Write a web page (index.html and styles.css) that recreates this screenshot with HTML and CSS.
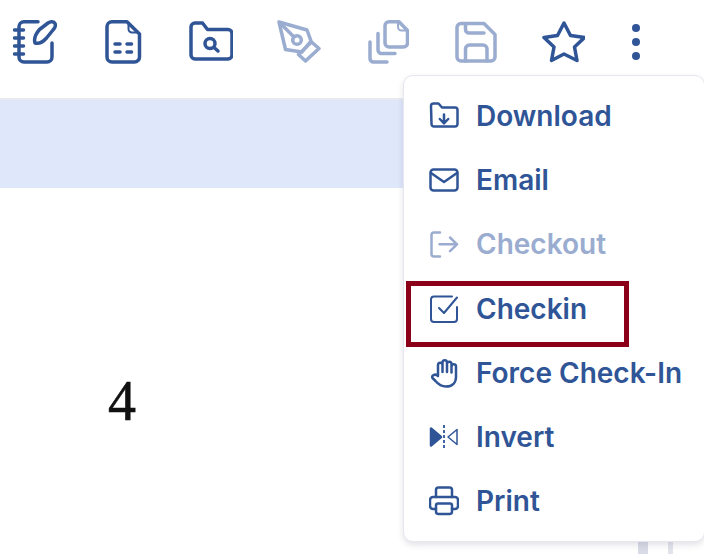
FILE: index.html
```html
<!DOCTYPE html>
<html lang="en">
<head>
<meta charset="utf-8">
<title>Document viewer</title>
<link rel="stylesheet" href="styles.css">
</head>
<body>
<div class="page">
  <header class="toolbar">
    <svg class="tool" viewBox="13 20 44 44"><path d="M38 21.800H24a5 5 0 0 0-5 5V57a5 5 0 0 0 5 5h23a5 5 0 0 0 5-5V43"/><path d="M14.500 30h9M14.500 38h9M14.500 46h9M14.500 54h9"/><path d="M35 43c-1.500-5 1-9.500 4.500-13.500L48 23c2.500-1.800 6-1.500 7 .5s.2 4-2 6.500l-6.500 8c-3.500 4-7.500 6-11.500 5z"/></svg>
    <svg class="tool" viewBox="101 20 44 44"><path d="M127 21.800h-15a5 5 0 0 0-5 5V57a5 5 0 0 0 5 5h22.500a5 5 0 0 0 5-5V34z"/><path class="thin" d="M128.500 23v6a3.500 3.500 0 0 0 3.500 3.500h6z"/><path d="M115 44h5M127 44h4.500M115 52h5M127 52h4.500"/></svg>
    <svg class="tool" viewBox="189 20 44 44"><path d="M191 27a4 4 0 0 1 4-4h7.500l5 6.500H228a4 4 0 0 1 4 4V55a4 4 0 0 1-4 4H195a4 4 0 0 1-4-4z"/><circle cx="210" cy="43.500" r="5"/><path d="M214 47.500l4 3.500"/></svg>
    <svg class="tool off" viewBox="277 20 44 44"><path d="M279 22l28 8 4 11-9 11-16.500-2.500z"/><path d="M280 23l14 14"/><circle cx="297" cy="40" r="4.300"/><path d="M311.500 42l7.500 6.500-13.500 12.500-7-6.500z"/></svg>
    <svg class="tool off" viewBox="365 20 44 44"><path d="M399 21.800h-10a4 4 0 0 0-4 4V43a4 4 0 0 0 4 4h14.500a4 4 0 0 0 4-4V30.500z"/><path class="thin" d="M398 23v4a3.500 3.500 0 0 0 3.500 3.500h5"/><path d="M378 33.500V50a3.500 3.500 0 0 0 3.500 3.500H395"/><path d="M370 42v16.500a3.500 3.500 0 0 0 3.500 3.500H387"/></svg>
    <svg class="tool off" viewBox="453 20 44 44"><path d="M484 23.500h-23a4 4 0 0 0-4 4V57a4 4 0 0 0 4 4h30a4 4 0 0 0 4-4V34.500z"/><path d="M465.500 24v5.500a3.500 3.500 0 0 0 3.500 3.500h15"/><path d="M465.500 61V49a4 4 0 0 1 4-4H483a4 4 0 0 1 4 4v12"/></svg>
    <svg class="tool" viewBox="541 20 44 44"><path d="M564 23l6.500 12.500 14 2-10 9.500 2.500 13.500-13-6.500-12.500 6.500 2.500-13.500-10-9.500 13.500-2z"/></svg>
    <svg class="tool dots" viewBox="629 20 14 44"><circle cx="636" cy="28" r="4"/><circle cx="636" cy="42" r="4"/><circle cx="636" cy="56" r="4"/></svg>
  </header>
  <div class="band"></div>
  <main class="sheet">
    <div class="number">4</div>
    <div class="marks"><span class="mark wide"></span><span class="mark"></span></div>
  </main>

  <nav class="menu">
    <a class="item">
      <svg class="icon" viewBox="429 101 30 30"><path d="M431 106a2.500 2.500 0 0 1 2.500-2.500h5l3.500 4h13a2.500 2.500 0 0 1 2.500 2.500v14a2.500 2.500 0 0 1-2.500 2.500h-21a2.500 2.500 0 0 1-2.500-2.500z"/><path d="M444 114.500V123M439.800 119l4.200 4.300 4.200-4.300"/></svg>
      <span>Download</span>
    </a>
    <a class="item">
      <svg class="icon" viewBox="429 165 30 30"><rect x="430.500" y="169.500" width="27" height="21" rx="3"/><path d="M431 173l13 9 13-9"/></svg>
      <span>Email</span>
    </a>
    <a class="item off">
      <svg class="icon" viewBox="429 229 30 30"><path d="M440 232.500h-6a2.500 2.500 0 0 0-2.500 2.500v19a2.500 2.500 0 0 0 2.500 2.500h6"/><path d="M439.500 244.300H457M450 237.500l7 6.800-7 6.800"/></svg>
      <span>Checkout</span>
    </a>
    <a class="item">
      <svg class="icon light" viewBox="429 294 30 30"><path d="M452 296.500h-18a3 3 0 0 0-3 3V319a3 3 0 0 0 3 3h20a3 3 0 0 0 3-3v-12"/><path d="M439 308l5 5 13-15.500"/></svg>
      <span>Checkin</span>
      <i class="highlight"></i>
    </a>
    <a class="item">
      <svg class="icon" viewBox="429 358 30 30"><path d="M438 375v-10a2.200 2.200 0 0 1 4.500 0v7-9.500a2.200 2.200 0 0 1 4.500 0v9.500-8a2.200 2.200 0 0 1 4.500 0v8.500-6a2.200 2.200 0 0 1 4.500 0V377c0 6-4 9.500-10 9.500-5.500 0-8-2.500-10.500-5.500l-3-3c-1.500-2.500 2.500-4.500 5-2.500l.5.500"/></svg>
      <span>Force Check-In</span>
    </a>
    <a class="item">
      <svg class="icon" viewBox="429 422 30 30"><path class="solid" d="M431 428.500v17l10-8.500z"/><path class="dash" d="M444 425v25"/><path class="hair" d="M457 429.500v15l-9-7.500z"/></svg>
      <span>Invert</span>
    </a>
    <a class="item">
      <svg class="icon" viewBox="429 486 30 30"><path d="M436 497v-7a2.500 2.500 0 0 1 2.500-2.500h11a2.500 2.500 0 0 1 2.500 2.500v7"/><path d="M436 509h-3a3 3 0 0 1-3-3v-6a3 3 0 0 1 3-3h22a3 3 0 0 1 3 3v6a3 3 0 0 1-3 3h-3"/><path d="M436 505.500a2 2 0 0 1 2-2h12a2 2 0 0 1 2 2v6a2.500 2.500 0 0 1-2.500 2.500h-11a2.500 2.500 0 0 1-2.500-2.500z"/></svg>
      <span>Print</span>
    </a>
  </nav>
</div>
</body>
</html>
```
FILE: styles.css
```css
* { box-sizing: border-box; }
html, body { margin: 0; height: 100%; background: #fff; }
body { overflow: hidden; font-family: Inter, "Liberation Sans", sans-serif; }
.page { position: relative; width: 704px; height: 554px; display: flex; flex-direction: column; overflow: hidden; }

.toolbar { height: 100px; flex: none; display: flex; gap: 44px; padding: 20px 0 0 13px; border-bottom: 2px solid #e8e8ef; }
.tool { width: 44px; height: 44px; flex: none; fill: none; stroke: #2f5597; stroke-width: 3.500; stroke-linecap: round; stroke-linejoin: round; }
.tool.off { stroke: #9aaccf; }
.tool .thin { stroke-width: 2; }
.tool.dots { width: 14px; fill: #2f5597; stroke: none; }

.band { height: 88px; flex: none; background: #dfe7fb; }

.sheet { flex: 1; display: flex; flex-direction: column; padding: 181px 0 0 108px; }
.number { font: 56px/64px "Liberation Serif", serif; color: #111; -webkit-text-stroke: .6px #111; filter: blur(.4px); }
.marks { margin-top: auto; display: flex; gap: 20px; align-self: flex-end; margin-right: 31px; height: 13px; }
.mark { width: 5px; background: #e2e4ec; }
.mark.wide { width: 10px; background: #d9dce6; }

.menu { position: absolute; left: 403px; top: 75px; width: 302px; height: 467px; padding: 8px 0 0 25px; background: #fff; border: 1.500px solid #e6e6ee; border-radius: 10px; box-shadow: 0 3px 6px rgba(60, 60, 90, .14); display: flex; flex-direction: column; }
.item { position: relative; height: 64.170px; flex: none; display: flex; align-items: center; gap: 17px; font-size: 28px; font-weight: 600; color: #2f5597; }
.item.off { color: #9aaccf; }
.icon { width: 30px; height: 30px; flex: none; fill: none; stroke: currentColor; stroke-width: 2.500; stroke-linecap: round; stroke-linejoin: round; }
.icon.light { stroke-width: 2; }
.icon .solid { fill: currentColor; }
.icon .dash { stroke-width: 1.800; stroke-dasharray: 3 2; stroke-linecap: butt; }
.icon .hair { stroke-width: 1.500; }
.highlight { position: absolute; left: -23px; top: 5px; width: 223px; height: 66px; border: 5px solid #8b0018; }
```
